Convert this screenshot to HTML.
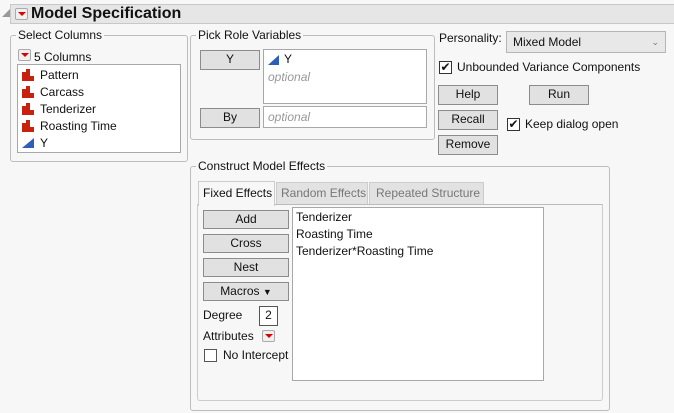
<!DOCTYPE html>
<html><head><style>
*{box-sizing:border-box}
body{margin:0;width:674px;height:413px;background:#f7f7f7;font-family:"Liberation Sans",sans-serif;font-size:12px;color:#111;position:relative;overflow:hidden}
.a{position:absolute}
.grp{position:absolute;border:1px solid #bdbdbd;border-radius:3px}
.lbl{position:absolute;background:#f7f7f7;padding:0 2px;font-size:12px;line-height:14px}
.btn{position:absolute;background:#e1e1e1;border:1px solid #8c8c8c;text-align:center;font-size:12px;line-height:17px}
.box{position:absolute;background:#fff;border:1px solid #a8a8a8}
.rb{position:absolute;width:13px;height:12px;border:1px solid #aaa;border-radius:2px;background:#f0f0f0}
.rb:after{content:"";position:absolute;left:2px;top:3px;border-left:4px solid transparent;border-right:4px solid transparent;border-top:4px solid #d00}
.cb{position:absolute;width:13px;height:13px;border:1px solid #333;background:#fff;font-size:12px;line-height:11px;text-align:center}
.it{position:absolute;left:22px;font-size:12px}
.opt{color:#999;font-style:italic}
</style></head><body>
<div class="a" style="left:2px;top:9px;width:0;height:0;border-left:8px solid transparent;border-bottom:8px solid #999"></div>
<div class="a" style="left:10px;top:4px;width:664px;height:20px;background:#e6e6e6;border:1px solid #c8c8c8;border-right:none"></div>
<div class="rb" style="left:15px;top:8px;width:13px;height:12px"></div>
<div class="a" style="left:31px;top:3px;font-size:16px;font-weight:bold;line-height:21px">Model Specification</div>

<div class="grp" style="left:10px;top:35px;width:178px;height:127px"></div>
<div class="lbl" style="left:16px;top:28px">Select Columns</div>
<div class="rb" style="left:18px;top:49px"></div>
<div class="a" style="left:34px;top:50px">5 Columns</div>
<div class="box" style="left:17px;top:64px;width:164px;height:89px">
<svg class="a" style="left:4px;top:4px" width="14" height="80">
<g id="b" fill="#c8210e"><rect x="0" y="3" width="4" height="9"/><rect x="4" y="0" width="4" height="12"/><rect x="8" y="7" width="4" height="5"/></g>
<use href="#b" y="17"/><use href="#b" y="34"/><use href="#b" y="51"/>
<polygon points="0,79 12,69 12,79" fill="#2d5fb8"/>
</svg>
<div class="it" style="top:3px">Pattern</div>
<div class="it" style="top:20px">Carcass</div>
<div class="it" style="top:37px">Tenderizer</div>
<div class="it" style="top:54px">Roasting Time</div>
<div class="it" style="top:71px">Y</div>
</div>

<div class="grp" style="left:190px;top:35px;width:245px;height:105px"></div>
<div class="lbl" style="left:196px;top:28px">Pick Role Variables</div>
<div class="btn" style="left:200px;top:50px;width:60px;height:20px">Y</div>
<div class="box" style="left:263px;top:49px;width:164px;height:55px">
<svg class="a" style="left:4px;top:4px" width="12" height="12"><polygon points="0,11 11,1 11,11" fill="#2d5fb8"/></svg>
<div class="a" style="left:20px;top:2px">Y</div>
<div class="a opt" style="left:4px;top:20px">optional</div>
</div>
<div class="btn" style="left:200px;top:108px;width:60px;height:20px">By</div>
<div class="box" style="left:263px;top:106px;width:164px;height:22px"><div class="a opt" style="left:4px;top:3px">optional</div></div>

<div class="a" style="left:439px;top:31px">Personality:</div>
<div class="a" style="left:506px;top:31px;width:160px;height:22px;background:#e8e8e8;border:1px solid #b5b5b5;line-height:20px;padding-left:6px">Mixed Model<span class="a" style="right:6px;top:0;font-size:9px;color:#777">&#8964;</span></div>
<div class="cb" style="left:439px;top:61px">&#10004;</div>
<div class="a" style="left:457px;top:60px">Unbounded Variance Components</div>
<div class="btn" style="left:438px;top:85px;width:60px;height:20px">Help</div>
<div class="btn" style="left:529px;top:85px;width:60px;height:20px">Run</div>
<div class="btn" style="left:438px;top:110px;width:60px;height:20px">Recall</div>
<div class="cb" style="left:507px;top:118px">&#10004;</div>
<div class="a" style="left:525px;top:117px">Keep dialog open</div>
<div class="btn" style="left:438px;top:135px;width:60px;height:20px">Remove</div>

<div class="grp" style="left:190px;top:166px;width:420px;height:245px"></div>
<div class="lbl" style="left:196px;top:159px">Construct Model Effects</div>
<div class="a" style="left:276px;top:182px;width:92px;height:23px;background:#e2e2e2;border:1px solid #ccc;color:#777;line-height:21px;padding-left:4px">Random Effects</div>
<div class="a" style="left:369px;top:182px;width:115px;height:23px;background:#e2e2e2;border:1px solid #ccc;color:#777;line-height:21px;padding-left:6px">Repeated Structure</div>
<div class="a" style="left:197px;top:204px;width:406px;height:197px;border:1px solid #ccc;border-top:1px solid #bbb;border-radius:0 0 3px 3px;background:#f7f7f7"></div>
<div class="a" style="left:198px;top:181px;width:77px;height:25px;background:#f7f7f7;border:1px solid #ccc;border-bottom:none;line-height:23px;padding-left:4px">Fixed Effects</div>
<div class="btn" style="left:203px;top:210px;width:86px;height:19px">Add</div>
<div class="btn" style="left:203px;top:234px;width:86px;height:19px">Cross</div>
<div class="btn" style="left:203px;top:258px;width:86px;height:19px">Nest</div>
<div class="btn" style="left:203px;top:282px;width:86px;height:19px">Macros <span style="font-size:9px">&#9660;</span></div>
<div class="a" style="left:203px;top:308px">Degree</div>
<div class="box" style="left:259px;top:306px;width:19px;height:20px;border-color:#555;text-align:center;line-height:17px">2</div>
<div class="a" style="left:203px;top:329px">Attributes</div>
<div class="rb" style="left:262px;top:330px"></div>
<div class="cb" style="left:204px;top:349px;border-color:#555"></div>
<div class="a" style="left:223px;top:348px">No Intercept</div>
<div class="box" style="left:292px;top:207px;width:252px;height:174px">
<div class="a" style="left:3px;top:2px">Tenderizer</div>
<div class="a" style="left:3px;top:19px">Roasting Time</div>
<div class="a" style="left:3px;top:36px">Tenderizer*Roasting Time</div>
</div>
</body></html>
